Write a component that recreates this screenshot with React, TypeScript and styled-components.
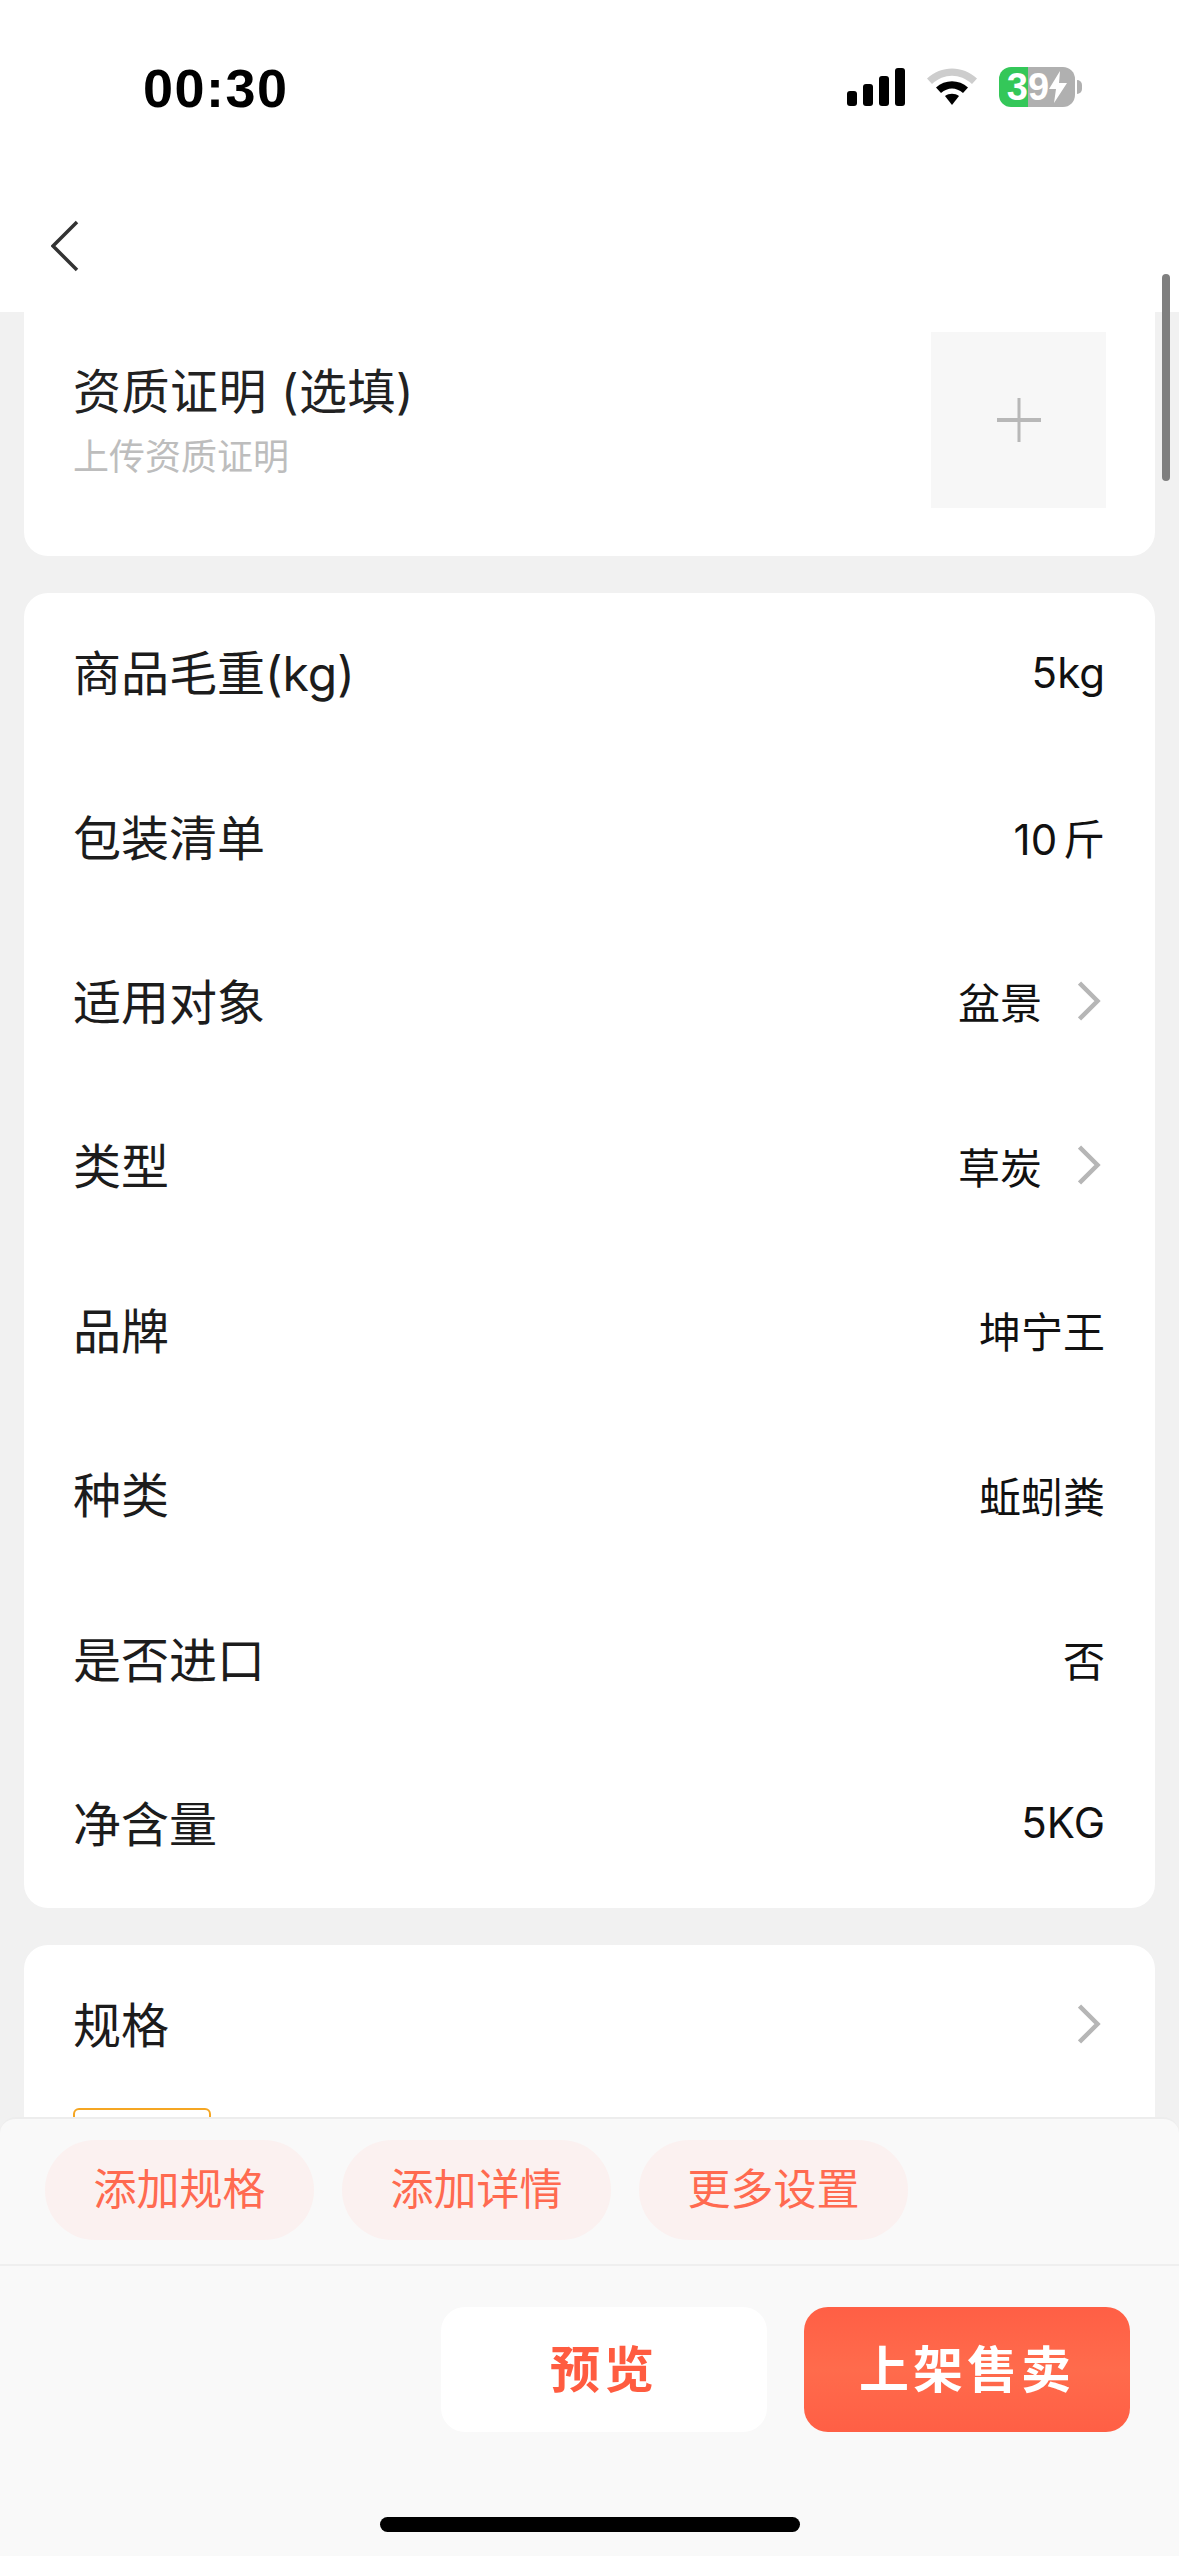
import React from 'react'
import styled, { createGlobalStyle } from 'styled-components'

const FONT = `Inter, 'Noto Sans CJK SC', sans-serif`

const GlobalStyle = createGlobalStyle`
  html, body {
    margin: 0;
    padding: 0;
    background: #f1f1f1;
    font-family: ${FONT};
  }
`

const Page = styled.div`
  position: relative;
  width: 1179px;
  height: 2556px;
  display: flex;
  flex-flow: column nowrap;
  overflow: hidden;
  background: #f1f1f1;
`

const Header = styled.div`
  height: 312px;
  flex: none;
  background: #fff;
`

const StatusBar = styled.div`
  height: 174px;
  padding: 60px 104px 0 143px;
  box-sizing: border-box;
  display: flex;
  justify-content: space-between;
  align-items: flex-start;
`

const Time = styled.div`
  font-family: 'Liberation Sans', sans-serif;
  font-size: 54px;
  line-height: 56px;
  font-weight: 700;
  letter-spacing: 1.5px;
  color: #000;
`

const StatusIcons = styled.div`
  display: flex;
  align-items: center;
  height: 54px;
  gap: 22px;
`

const Battery = styled.div`
  position: relative;
  width: 76px;
  height: 40px;
  border-radius: 12px;
  background: linear-gradient(to right, #34c759 38%, #b0b0b0 38%);
  display: flex;
  align-items: center;
  justify-content: center;
  color: #fff;
  font-family: 'Liberation Sans', sans-serif;
  font-size: 38px;
  font-weight: 700;
  &::after {
    content: '';
    position: absolute;
    right: -7px;
    top: 13px;
    width: 5px;
    height: 14px;
    border-radius: 0 7px 7px 0;
    background: #b0b0b0;
  }
`

const NavBar = styled.div`
  padding: 46px 0 0 51px;
  line-height: 0;
`

const Scrollbar = styled.div`
  position: absolute;
  top: 274px;
  right: 9px;
  width: 8px;
  height: 207px;
  border-radius: 4px;
  background: #7f7f7f;
`

const Main = styled.div`
  flex: 1;
  min-height: 0;
  overflow: hidden;
  padding: 0 24px;
  display: flex;
  flex-flow: column nowrap;
  gap: 37px;
`

const Card = styled.div`
  flex: none;
  background: #fff;
  border-radius: 24px;
`

const CertCard = styled(Card)`
  border-radius: 0 0 24px 24px;
  padding: 20px 49px 48px 49px;
  display: flex;
  justify-content: space-between;
  align-items: center;
`

const CertTitle = styled.div`
  font-size: 48px;
  line-height: 66px;
  letter-spacing: 0.5px;
  color: #222;
`

const CertHint = styled.div`
  margin-top: 7px;
  font-size: 36px;
  line-height: 50px;
  color: #bdbdbd;
`

const UploadBox = styled.div`
  width: 175px;
  height: 176px;
  background: #f7f7f7;
  display: flex;
  align-items: center;
  justify-content: center;
`

const Row = styled.div`
  height: 164.4px;
  box-sizing: border-box;
  padding: 0 50px 6px 49px;
  display: flex;
  justify-content: space-between;
  align-items: center;
`

const Label = styled.div`
  margin-bottom: 4px;
  font-size: 48px;
  color: #1c1c1c;
`

const Value = styled.div`
  display: flex;
  align-items: center;
  gap: 36px;
  font-size: 42px;
  word-spacing: -6px;
  color: #111;
`

const SpecChip = styled.div`
  width: 138px;
  height: 90px;
  margin: -2px 0 0 49px;
  box-sizing: border-box;
  border: 2px solid #f5a623;
  border-radius: 6px;
`

const Toolbar = styled.div`
  flex: none;
  height: 149px;
  box-sizing: border-box;
  padding: 21px 45px 0;
  display: flex;
  gap: 28px;
  background: #f9f9f9;
  border-top: 2px solid #ededed;
  border-bottom: 2px solid #efefef;
  border-radius: 16px 16px 0 0;
`

const Pill = styled.div`
  width: 269px;
  height: 100px;
  box-sizing: border-box;
  padding-bottom: 8px;
  border-radius: 50px;
  background: #fbf1f0;
  color: #ff6a50;
  font-size: 43px;
  display: flex;
  align-items: center;
  justify-content: center;
`

const Footer = styled.div`
  flex: none;
  height: 290px;
  box-sizing: border-box;
  padding-top: 41px;
  background: #f9f9f9;
  display: flex;
  flex-flow: column nowrap;
  align-items: center;
`

const Actions = styled.div`
  align-self: flex-end;
  display: flex;
  gap: 37px;
  padding-right: 49px;
`

const ActionButton = styled.div<{ $primary?: boolean }>`
  width: 326px;
  height: 125px;
  box-sizing: border-box;
  padding-bottom: 7px;
  border-radius: 24px;
  display: flex;
  align-items: center;
  justify-content: center;
  font-size: 50px;
  font-weight: 700;
  letter-spacing: 4px;
  color: ${p => (p.$primary ? '#fff' : '#ff5c40')};
  background: ${p =>
    p.$primary
      ? 'linear-gradient(to bottom, #ff5f45 0%, #ff6b4c 50%, #ff5f45 100%)'
      : '#fff'};
`

const HomeBar = styled.div`
  width: 420px;
  height: 15px;
  margin-top: 85px;
  border-radius: 8px;
  background: #000;
`

const rows: { label: string; value: string; arrow?: boolean }[] = [
  { label: '商品毛重(kg)', value: '5kg' },
  { label: '包装清单', value: '10 斤' },
  { label: '适用对象', value: '盆景', arrow: true },
  { label: '类型', value: '草炭', arrow: true },
  { label: '品牌', value: '坤宁王' },
  { label: '种类', value: '蚯蚓粪' },
  { label: '是否进口', value: '否' },
  { label: '净含量', value: '5KG' },
]

function Chevron() {
  return (
    <svg width="27" height="42" viewBox="0 0 27 42" fill="none">
      <path d="M1.5 3L19.5 21L1.5 39" stroke="#b6b6b6" strokeWidth="4.5" />
    </svg>
  )
}

function SignalIcon() {
  return (
    <svg width="58" height="38" viewBox="0 0 58 38" fill="#000">
      <rect x="0" y="23" width="10" height="15" rx="3" />
      <rect x="16" y="16" width="10" height="22" rx="3" />
      <rect x="32" y="8" width="10" height="30" rx="3" />
      <rect x="48" y="0" width="10" height="38" rx="3" />
    </svg>
  )
}

function WifiIcon() {
  return (
    <svg width="50" height="38" viewBox="0 0 50 38">
      <path d="M0 10.5C14 -3 36 -3 50 10.5L45 16C33 5 17 5 5 16Z" fill="#cdcdcd" />
      <path d="M9 19.5C18 11 32 11 41 19.5L36 25C29 19 21 19 14 25Z" fill="#000" />
      <path d="M18 28C22 25 28 25 32 28L25 37Z" fill="#000" />
    </svg>
  )
}

function BoltIcon() {
  return (
    <svg width="18" height="32" viewBox="0 0 18 32" fill="#fff">
      <path d="M11 0L0 18H7L5 32L18 12H10Z" />
    </svg>
  )
}

export default function App() {
  return (
    <Page>
      <GlobalStyle />
      <Header>
        <StatusBar>
          <Time>00:30</Time>
          <StatusIcons>
            <SignalIcon />
            <WifiIcon />
            <Battery>
              39
              <BoltIcon />
            </Battery>
          </StatusIcons>
        </StatusBar>
        <NavBar>
          <svg width="28" height="52" viewBox="0 0 28 52" fill="none">
            <path d="M26 2L2 26L26 50" stroke="#333" strokeWidth="3.5" />
          </svg>
        </NavBar>
      </Header>
      <Main>
        <CertCard>
          <div>
            <CertTitle>资质证明 (选填)</CertTitle>
            <CertHint>上传资质证明</CertHint>
          </div>
          <UploadBox>
            <svg width="44" height="44" viewBox="0 0 44 44" fill="#b8b8b8">
              <rect x="20.5" y="0" width="3" height="44" />
              <rect x="0" y="20" width="44" height="4" />
            </svg>
          </UploadBox>
        </CertCard>
        <Card>
          {rows.map((row, index) => (
            <Row key={index}>
              <Label>{row.label}</Label>
              <Value>
                {row.value}
                {row.arrow && <Chevron />}
              </Value>
            </Row>
          ))}
        </Card>
        <Card>
          <Row>
            <Label>规格</Label>
            <Chevron />
          </Row>
          <SpecChip />
        </Card>
      </Main>
      <Toolbar>
        <Pill>添加规格</Pill>
        <Pill>添加详情</Pill>
        <Pill>更多设置</Pill>
      </Toolbar>
      <Footer>
        <Actions>
          <ActionButton>预览</ActionButton>
          <ActionButton $primary>上架售卖</ActionButton>
        </Actions>
        <HomeBar />
      </Footer>
      <Scrollbar />
    </Page>
  )
}
